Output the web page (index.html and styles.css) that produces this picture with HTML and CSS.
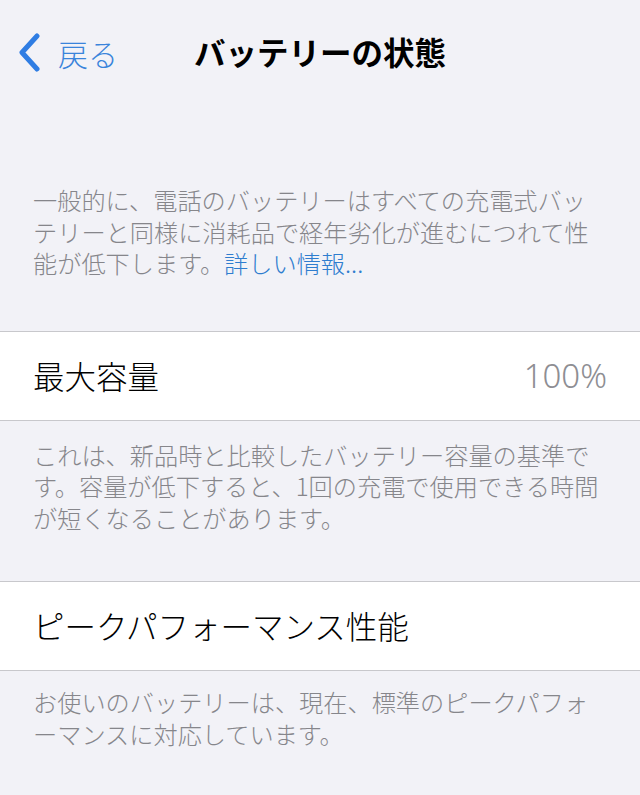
FILE: index.html
```html
<!DOCTYPE html>
<html lang="ja">
<head>
<meta charset="utf-8">
<title>バッテリーの状態</title>
<link rel="stylesheet" href="styles.css">
</head>
<body>
<div class="screen">
  <header class="nav">
    <a class="back" href="#">
      <svg class="chev" width="26" height="40" viewBox="0 0 26 40"><path d="M20 3 L5 19.5 L20 36" fill="none" stroke="#2f7de3" stroke-width="5" stroke-linecap="round" stroke-linejoin="round"/></svg>
      <span class="back-label">戻る</span>
    </a>
    <h1 class="title">バッテリーの状態</h1>
    <span class="spacer"></span>
  </header>

  <p class="note intro">一般的に、電話のバッテリーはすべての充電式バッ<br>テリーと同様に消耗品で経年劣化が進むにつれて性<br>能が低下します。<a class="link" href="#">詳しい情報...</a></p>

  <section class="group">
    <div class="cell">
      <span class="cell-label">最大容量</span>
      <span class="cell-value">100%</span>
    </div>
  </section>
  <p class="note footer1">これは、新品時と比較したバッテリー容量の基準で<br>す。容量が低下すると、1回の充電で使用できる時間<br>が短くなることがあります。</p>

  <section class="group">
    <div class="cell">
      <span class="cell-label">ピークパフォーマンス性能</span>
    </div>
  </section>
  <p class="note footer2">お使いのバッテリーは、現在、標準のピークパフォ<br>ーマンスに対応しています。</p>
</div>
</body>
</html>
```

FILE: styles.css
```css
html, body {
  margin: 0;
  padding: 0;
  background: #f2f2f7;
}
body {
  font-family: "Noto Sans CJK JP", "Noto Sans", sans-serif;
  color: #000;
}
.screen {
  width: 640px;
  height: 795px;
  overflow: hidden;
  background: #f2f2f7;
}
.nav {
  height: 104px;
  display: grid;
  grid-template-columns: 1fr auto 1fr;
  align-items: center;
}
.back {
  display: flex;
  align-items: center;
  text-decoration: none;
  padding-left: 17px;
  margin-top: 2px;
}
.chev {
  display: block;
}
.back-label {
  margin-left: 15px;
  font-size: 30px;
  font-weight: 300;
  color: #3a84db;
  line-height: 1;
}
.title {
  margin: 0;
  font-size: 31.5px;
  font-weight: 700;
  line-height: 1;
  letter-spacing: 0;
}
.note {
  margin: 0;
  padding: 0 33px;
  font-size: 24.2px;
  font-weight: 300;
  line-height: 31.5px;
  color: #86868b;
}
.intro {
  margin-top: 80px;
  margin-bottom: 52px;
}
.link {
  color: #2f7dcf;
  text-decoration: none;
}
.group {
  background: #fff;
  border-top: 1px solid #c8c8cc;
  border-bottom: 1px solid #c8c8cc;
}
.cell {
  height: 88px;
  padding: 0 33px;
  display: flex;
  align-items: center;
  justify-content: space-between;
}
.cell-label {
  font-size: 31.5px;
  font-weight: 300;
  line-height: 1;
}
.cell-value {
  font-family: "Noto Sans", "Liberation Sans", sans-serif;
  font-size: 33px;
  font-weight: 300;
  color: #8e8e93;
  line-height: 1;
}
.footer1 {
  margin-top: 18px;
  margin-bottom: 48px;
}
.footer2 {
  margin-top: 15px;
}
```
